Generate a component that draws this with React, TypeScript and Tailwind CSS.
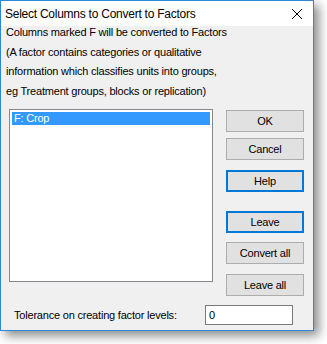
import React from "react";

const btnBase =
  "h-[22px] w-[78px] bg-[#e1e1e1] text-[11px] tracking-[-0.2px] text-black flex items-center justify-center";

function DlgButton({
  label,
  focused,
  className,
}: {
  label: string;
  focused?: boolean;
  className?: string;
}) {
  return (
    <button
      type="button"
      className={`${btnBase} ${
        focused ? "border-2 border-[#0078d7]" : "border border-[#adadad]"
      } ${className ?? ""}`}
    >
      {label}
    </button>
  );
}

export default function App() {
  return (
    <div className="h-[344px] w-[327px] bg-white">
      <div
        className="flex h-[331px] w-[314px] flex-col border border-[#2b88d8] bg-[#f0f0f0] shadow-[5px_5px_10px_rgba(0,0,0,0.45)]"
        style={{ fontFamily: '"Liberation Sans", Arial, sans-serif' }}
      >
        {/* title bar */}
        <div className="flex h-[25px] shrink-0 items-center justify-between bg-white pl-[4px] pr-[9px]">
          <span className="text-[12px] tracking-[-0.25px] text-black">
            Select Columns to Convert to Factors
          </span>
          <svg width="12" height="12" viewBox="0 0 12 12" className="mr-[1px]">
            <path d="M1 1 L11 11 M11 1 L1 11" stroke="#000" strokeWidth="1" />
          </svg>
        </div>

        {/* body */}
        <div className="flex flex-1 flex-col">
          <div className="-mt-[3px] pl-[5px] text-[11px] leading-[19.7px] tracking-[-0.2px] text-black">
            <p>Columns marked F will be converted to Factors</p>
            <p>(A factor contains categories or qualitative</p>
            <p>information which classifies units into groups,</p>
            <p>eg Treatment groups, blocks or replication)</p>
          </div>

          <div className="mt-[7px] flex items-start">
            <div className="ml-[8px] h-[173px] w-[204px] border border-[#828790] bg-white p-[2px]">
              <div className="flex h-[13px] items-center bg-[#3399ff] pl-[2px] text-[11px] tracking-[-0.2px] text-white">
                F: Crop
              </div>
            </div>

            <div className="ml-[13px] mt-[1px] flex flex-col">
              <DlgButton label="OK" />
              <DlgButton label="Cancel" className="mt-[6px]" />
              <DlgButton label="Help" focused className="mt-[10px]" />
              <DlgButton label="Leave" focused className="mt-[19px]" />
              <DlgButton label="Convert all" className="mt-[9px]" />
              <DlgButton label="Leave all" className="mt-[10px]" />
            </div>
          </div>

          <div className="mt-[9px] flex items-center">
            <span className="ml-[13px] w-[191px] text-[11px] tracking-[-0.2px] text-black">
              Tolerance on creating factor levels:
            </span>
            <div className="flex h-[20px] w-[88px] items-center border border-[#7a7a7a] bg-white pl-[3px] text-[11px] text-black">
              0
            </div>
          </div>
        </div>
      </div>
    </div>
  );
}
